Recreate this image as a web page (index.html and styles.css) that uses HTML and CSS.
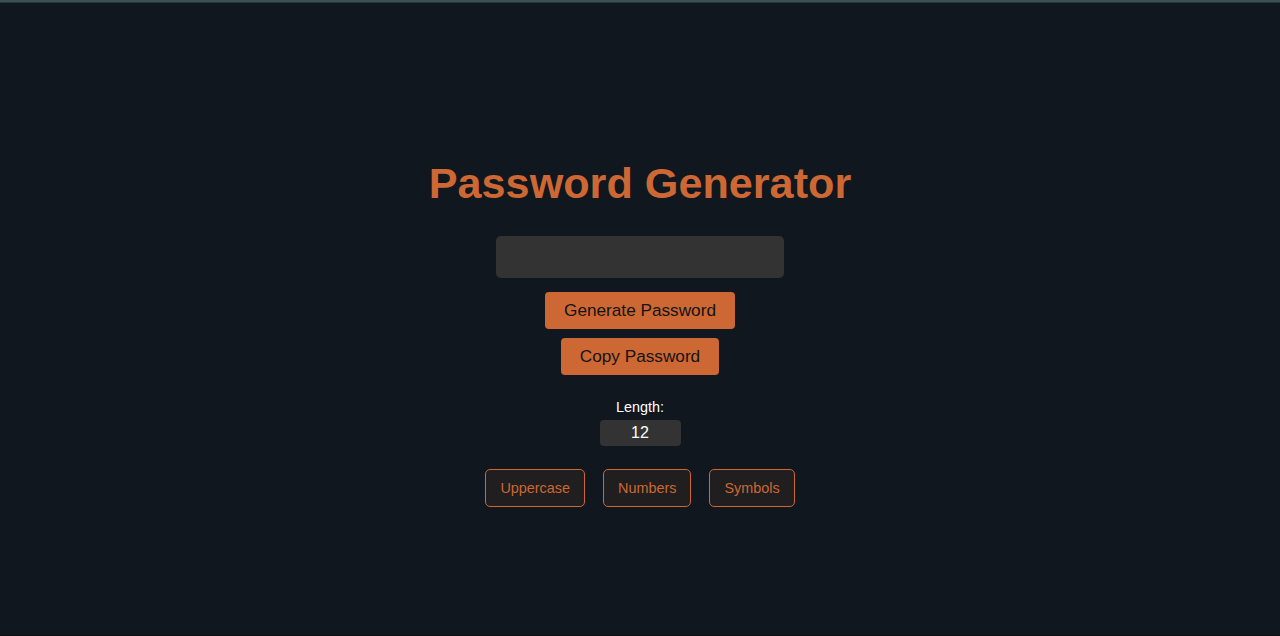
FILE: index.html
```html
<!DOCTYPE html>
<html lang="en">
<head>
<meta charset="utf-8">
<title>Password Generator</title>
<link rel="stylesheet" href="styles.css">
</head>
<body>
<div class="topbar"></div>
<main class="app">
  <h1 class="title">Password Generator</h1>
  <input class="output" type="text" readonly>
  <button class="primary primary-first">Generate Password</button>
  <button class="primary">Copy Password</button>
  <label class="length-label" for="len">Length:</label>
  <input class="length" id="len" type="text" value="12">
  <div class="options">
    <button class="option">Uppercase</button>
    <button class="option">Numbers</button>
    <button class="option">Symbols</button>
  </div>
</main>
</body>
</html>
```
FILE: styles.css
```css
html, body {
  margin: 0;
  padding: 0;
}
body {
  background: #10171f;
  font-family: "Liberation Sans", Arial, sans-serif;
  height: 636px;
  overflow: hidden;
  box-sizing: border-box;
  border-bottom: 1px solid #0a0e13;
}
.topbar {
  height: 3px;
  background: linear-gradient(#3b4f54 0, #3b4f54 2px, #26363a 2px);
}
.app {
  display: flex;
  flex-direction: column;
  align-items: center;
  padding-top: 155px;
}
.title {
  margin: 0 0 28px;
  font-size: 43.2px;
  line-height: 50px;
  font-weight: bold;
  color: #cd6733;
}
.output {
  width: 288px;
  height: 42px;
  box-sizing: border-box;
  border: none;
  border-radius: 5px;
  background: #333333;
  margin: 0 0 14px;
  color: #fff;
  font-size: 16px;
  outline: none;
}
.primary {
  height: 37px;
  box-sizing: border-box;
  padding: 0 19px;
  border: none;
  border-radius: 4px;
  background: #cd6733;
  color: #141414;
  font-family: "Liberation Sans", Arial, sans-serif;
  font-size: 17.2px;
  line-height: 37px;
  margin: 0;
}
.primary-first {
  margin-bottom: 9px;
}
.length-label {
  margin-top: 24px;
  color: #ffffff;
  font-size: 14.4px;
  line-height: 16px;
}
.length {
  margin-top: 5px;
  width: 81px;
  height: 26px;
  box-sizing: border-box;
  border: none;
  border-radius: 4px;
  background: #333333;
  color: #ffffff;
  text-align: center;
  font-family: "Liberation Sans", Arial, sans-serif;
  font-size: 16px;
  outline: none;
}
.options {
  display: flex;
  gap: 18px;
  margin-top: 23px;
}
.option {
  height: 38px;
  box-sizing: border-box;
  padding: 0 14px;
  border: 1.5px solid #cd6733;
  border-radius: 5px;
  background: #201e1f;
  color: #cd6733;
  font-family: "Liberation Sans", Arial, sans-serif;
  font-size: 14.4px;
}
```
